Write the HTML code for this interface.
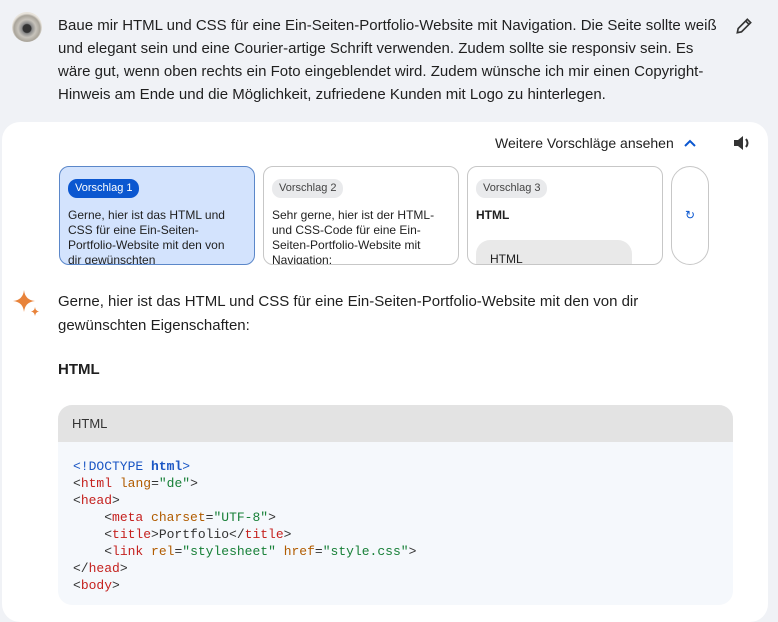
<!DOCTYPE html>
<html><head><meta charset="utf-8"><style>
*{margin:0;padding:0;box-sizing:border-box}
body{width:778px;height:600px;overflow:hidden;background:#f0f2f6;font-family:"Liberation Sans",Arial,sans-serif;color:#1f1f1f;position:relative}
.abs{position:absolute}
.q{left:58px;top:14px;width:666px;font-size:15px;line-height:23px}
.av{left:12px;top:12px;width:30px;height:30px;border-radius:50%;background:radial-gradient(circle at 50% 55%,#333 0 4px,#888 5px,#c8c4bc 9px,#a9a49a 13px,#e8e4dc 15px)}
.card{left:2px;top:122px;width:766px;height:500px;background:#fff;border-radius:18px}
.more{left:495px;top:135px;font-size:14px;color:#1f1f1f}
.s{top:166px;width:196px;height:99px;border:1px solid #c7c7c7;border-radius:10px;background:#fff;padding:12px 16px 12px 8px;font-size:12px;line-height:15px;overflow:hidden}
.s.a{background:#d3e3fd;border-color:#5b87c9}
.tag{display:inline-block;background:#e9eaec;color:#444;border-radius:9px;padding:2px 7px;font-size:11px;margin-bottom:10px}
.a .tag{background:#0b57d0;color:#fff}
.ans{left:58px;top:290px;font-size:15px;line-height:24px;width:600px}
.code{left:58px;top:405px;width:675px;height:200px;border-radius:14px;overflow:hidden;background:#f5f8fc}
.ch{height:37px;background:#e3e3e3;font-size:13px;padding:11px 14px;color:#333}
pre{font-family:"Liberation Mono",monospace;font-size:13px;line-height:17px;padding:16px 15px;color:#333}
.t{color:#c5221f}.at{color:#b15c00}.v{color:#188038}.k{color:#1a56c4;font-weight:bold}
</style></head><body>
<div class="abs av"></div>
<div class="abs q">Baue mir HTML und CSS für eine Ein-Seiten-Portfolio-Website mit Navigation. Die Seite sollte weiß und elegant sein und eine Courier-artige Schrift verwenden. Zudem sollte sie responsiv sein. Es wäre gut, wenn oben rechts ein Foto eingeblendet wird. Zudem wünsche ich mir einen Copyright-Hinweis am Ende und die Möglichkeit, zufriedene Kunden mit Logo zu hinterlegen.</div>
<svg class="abs" style="left:734px;top:16px" width="20" height="20" viewBox="0 0 24 24"><path d="M4 20l1-5L16 4l4 4L9 19z M14 6l4 4" fill="none" stroke="#333" stroke-width="2"/></svg>
<div class="abs card"></div>
<div class="abs more">Weitere Vorschläge ansehen</div>
<svg class="abs" style="left:683px;top:137px" width="14" height="12" viewBox="0 0 14 12"><path d="M2 9l5-5 5 5" fill="none" stroke="#0b57d0" stroke-width="2"/></svg>
<svg class="abs" style="left:732px;top:134px" width="20" height="18" viewBox="0 0 20 18"><path d="M2 6h4l5-4v14l-5-4H2z" fill="#333"/><path d="M14 5q3 4 0 8" fill="none" stroke="#333" stroke-width="2"/></svg>
<div class="abs s a" style="left:59px"><span class="tag">Vorschlag 1</span><br>Gerne, hier ist das HTML und CSS für eine Ein-Seiten-Portfolio-Website mit den von dir gewünschten</div>
<div class="abs s" style="left:263px"><span class="tag">Vorschlag 2</span><br>Sehr gerne, hier ist der HTML-und CSS-Code für eine Ein-Seiten-Portfolio-Website mit Navigation:</div>
<div class="abs s" style="left:467px;padding-right:8px"><span class="tag">Vorschlag 3</span><br><b>HTML</b><div style="margin-top:17px;background:#e9e9e9;border-radius:14px 14px 0 0;height:40px;width:156px;padding:12px 14px;font-size:12px">HTML</div></div>
<div class="abs" style="left:671px;top:166px;width:38px;height:99px;border:1px solid #c7c7c7;border-radius:19px;color:#0b57d0;font-size:12px;text-align:center;line-height:97px">↻</div>
<svg class="abs" style="left:13px;top:290px" width="28" height="28" viewBox="0 0 28 28"><path d="M11 0Q12 10 22 11Q12 12 11 22Q10 12 0 11Q10 10 11 0z" fill="#e8833a"/><path d="M22 17Q22.5 21 26 21.5Q22.5 22 22 26Q21.5 22 18 21.5Q21.5 21 22 17z" fill="#e8833a"/></svg>
<div class="abs ans">Gerne, hier ist das HTML und CSS für eine Ein-Seiten-Portfolio-Website mit den von dir gewünschten Eigenschaften:</div>
<div class="abs" style="left:58px;top:361px;font-size:15px;font-weight:bold">HTML</div>
<div class="abs code"><div class="ch">HTML</div><pre><span style="color:#1a56c4">&lt;!DOCTYPE</span> <span class="k">html</span><span style="color:#1a56c4">&gt;</span>
&lt;<span class="t">html</span> <span class="at">lang</span>=<span class="v">"de"</span>&gt;
&lt;<span class="t">head</span>&gt;
    &lt;<span class="t">meta</span> <span class="at">charset</span>=<span class="v">"UTF-8"</span>&gt;
    &lt;<span class="t">title</span>&gt;Portfolio&lt;/<span class="t">title</span>&gt;
    &lt;<span class="t">link</span> <span class="at">rel</span>=<span class="v">"stylesheet"</span> <span class="at">href</span>=<span class="v">"style.css"</span>&gt;
&lt;/<span class="t">head</span>&gt;
&lt;<span class="t">body</span>&gt;</pre></div>
</body></html>
